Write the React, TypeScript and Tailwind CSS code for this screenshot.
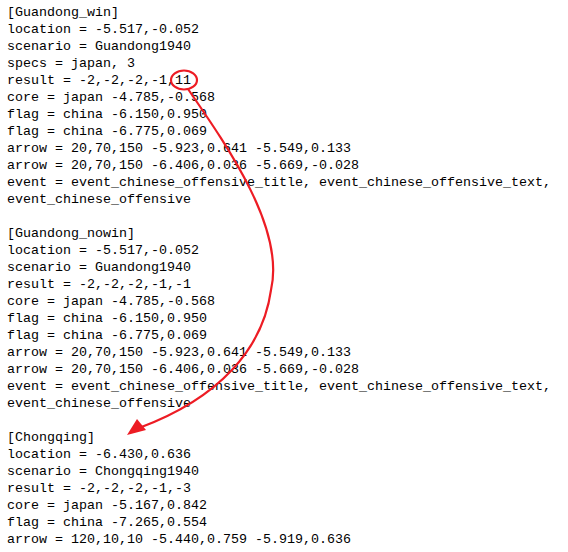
const sections = [
  [
    '[Guandong_win]',
    'location = -5.517,-0.052',
    'scenario = Guandong1940',
    'specs = japan, 3',
    'result = -2,-2,-2,-1,11',
    'core = japan -4.785,-0.568',
    'flag = china -6.150,0.950',
    'flag = china -6.775,0.069',
    'arrow = 20,70,150 -5.923,0.641 -5.549,0.133',
    'arrow = 20,70,150 -6.406,0.036 -5.669,-0.028',
    'event = event_chinese_offensive_title, event_chinese_offensive_text,',
    'event_chinese_offensive',
  ],
  [
    '[Guandong_nowin]',
    'location = -5.517,-0.052',
    'scenario = Guandong1940',
    'result = -2,-2,-2,-1,-1',
    'core = japan -4.785,-0.568',
    'flag = china -6.150,0.950',
    'flag = china -6.775,0.069',
    'arrow = 20,70,150 -5.923,0.641 -5.549,0.133',
    'arrow = 20,70,150 -6.406,0.036 -5.669,-0.028',
    'event = event_chinese_offensive_title, event_chinese_offensive_text,',
    'event_chinese_offensive',
  ],
  [
    '[Chongqing]',
    'location = -6.430,0.636',
    'scenario = Chongqing1940',
    'result = -2,-2,-2,-1,-3',
    'core = japan -5.167,0.842',
    'flag = china -7.265,0.554',
    'arrow = 120,10,10 -5.440,0.759 -5.919,0.636',
  ],
]

// red markup drawn over the file text
function Markup() {
  return (
    <svg className="pointer-events-none absolute left-0 top-0" width="568" height="552" viewBox="0 0 568 552">
      <ellipse cx="184" cy="80" rx="13" ry="9.5" fill="none" stroke="#ed1c24" strokeWidth="2.2" />
      <path
        d="M188 89 C 230 150, 285 230, 271 290 C 263 348, 220 398, 139 428"
        fill="none"
        stroke="#ed1c24"
        strokeWidth="2.2"
      />
      <polygon points="127,435 137,419 146,430" fill="#ed1c24" />
    </svg>
  )
}

export default function App() {
  return (
    <div className="relative h-[552px] w-[568px] overflow-hidden bg-white">
      <div className="flex flex-col gap-[17px] pl-[7px] pt-[4px] font-['Liberation_Mono','Courier_New',monospace] text-[13.333px] leading-[17px] text-black">
        {sections.map((lines, i) => (
          <div key={i}>
            {lines.map((line, j) => (
              <div key={j} className="whitespace-pre">{line}</div>
            ))}
          </div>
        ))}
      </div>
      <Markup />
    </div>
  )
}
